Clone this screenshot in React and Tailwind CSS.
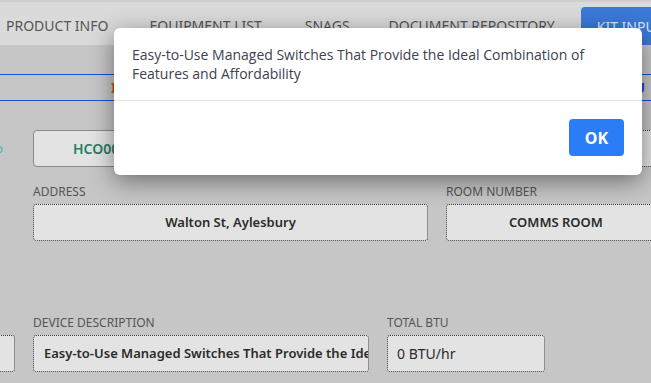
import React from "react";

const Box = ({ className = "", children }) => (
  <div
    className={
      "h-[37px] shrink-0 bg-[#e3e3e3] border border-dotted border-[#3a3a3a] rounded-[3px] flex items-center text-[13px] text-[#2b2b2b] " +
      className
    }
  >
    {children}
  </div>
);

const Label = ({ children }) => (
  <div className="text-[12px] leading-[14px] text-[#555] uppercase mb-[5px]">{children}</div>
);

export default function App() {
  return (
    <div
      className="relative w-[651px] h-[383px] overflow-hidden bg-[#c6c6c6]"
      style={{ fontFamily: "'Noto Sans', 'Open Sans', sans-serif" }}
    >
      {/* tabs */}
      <div className="h-[45px] bg-[#dadada] border-t-2 border-[#cecece] flex items-end text-[14px] text-[#555] whitespace-nowrap">
        <div className="h-full flex items-center ml-[6px] pt-[3px] shrink-0">PRODUCT INFO</div>
        <div className="h-full flex items-center ml-[41px] pt-[3px] shrink-0">EQUIPMENT LIST</div>
        <div className="h-full flex items-center ml-[43px] pt-[3px] shrink-0">SNAGS</div>
        <div className="h-full flex items-center ml-[39px] pt-[3px] shrink-0">DOCUMENT REPOSITORY</div>
        <div className="h-[38px] flex items-center ml-[26px] pl-[16px] pr-[20px] bg-[#3b7ad8] text-[#dfe8f7] rounded-t-[4px] shrink-0">
          KIT INPUT
        </div>
      </div>

      {/* section header between blue lines */}
      <div className="mt-[29px] h-[27px] border-y border-[#1c4fe0] flex items-center justify-between font-bold text-[14px] whitespace-nowrap">
        <span className="ml-[111px] text-[#c8501a]">IT DETAILS</span>
        <span className="text-[#2246c8] mr-[6px]">EDU</span>
      </div>

      {/* first box row */}
      <div className="mt-[29px] flex items-center whitespace-nowrap">
        <span className="w-[33px] shrink-0 -ml-[30px] text-right text-[13px] text-[#3bb6c7]">o</span>
        <div className="ml-[30px] h-[37px] w-[230px] shrink-0 bg-[#e3e3e3] border border-[#8a8a8a] rounded-[4px] flex items-center pl-[39px] text-[14px] font-semibold text-[#2a7c63]">
          HCO00123
        </div>
        <Box className="ml-[18px] w-[173px]" />
        <Box className="ml-[18px] w-[260px] pl-[196px] font-semibold text-[#3f6e1f]">o:</Box>
      </div>

      {/* address row */}
      <div className="mt-[18px] flex gap-[18px] pl-[33px]">
        <div className="shrink-0">
          <Label>Address</Label>
          <Box className="w-[395px] justify-center font-semibold">Walton St, Aylesbury</Box>
        </div>
        <div className="shrink-0">
          <Label>Room Number</Label>
          <Box className="w-[260px] justify-center font-semibold pr-[40px]">COMMS ROOM</Box>
        </div>
      </div>

      {/* device row */}
      <div className="mt-[75px] flex items-end gap-[18px] -ml-[100px]">
        <Box className="w-[115px]" />
        <div className="shrink-0">
          <Label>Device Description</Label>
          <Box className="w-[336px] pl-[10px] font-semibold overflow-hidden whitespace-nowrap">
            Easy-to-Use Managed Switches That Provide the Ideal Combination of Features and Affordability
          </Box>
        </div>
        <div className="shrink-0">
          <Label>Total BTU</Label>
          <Box className="w-[158px] pl-[9px] text-[14px]">0 BTU/hr</Box>
        </div>
      </div>

      {/* modal */}
      <div className="absolute inset-0">
        <div className="absolute left-[114px] top-[28px] w-[528px] h-[147px] bg-white rounded-[6px] shadow-[0_6px_24px_rgba(0,0,0,0.45)] flex flex-col">
          <div
            className="h-[73px] border-b border-[#e2e2e2] px-[18px] pt-[17px] text-[14px] leading-[19px] text-[#3c4250]"
            style={{ fontFamily: "'Open Sans', sans-serif" }}
          >
            Easy-to-Use Managed Switches That Provide the Ideal Combination of Features and Affordability
          </div>
          <div className="flex-1 flex items-start justify-end pr-[18px] pt-[18px]">
            <button className="w-[55px] h-[37px] bg-[#2a7df7] text-white font-bold text-[16px] rounded-[4px]">
              OK
            </button>
          </div>
        </div>
      </div>
    </div>
  );
}
